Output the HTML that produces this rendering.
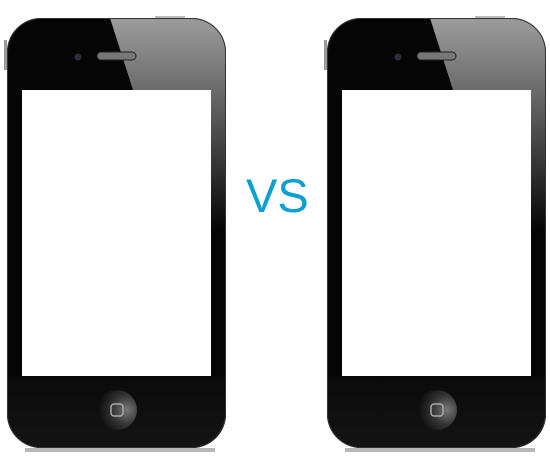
<!DOCTYPE html><html><head><style>body{margin:0;background:#fff;width:550px;height:474px;overflow:hidden;position:relative}
.vs{position:absolute;left:246px;top:168px;font:47px "Liberation Sans",sans-serif;color:#0aa0d2;}
</style></head><body>
<svg width="550" height="474" style="position:absolute;left:0;top:0">
<defs>
<linearGradient id="g" x1="0" y1="0" x2="0" y2="1"><stop offset="0" stop-color="#9c9c9c"/><stop offset="0.35" stop-color="#6a6a6a"/><stop offset="1" stop-color="#050505"/></linearGradient>
<radialGradient id="hb" cx="0.75" cy="0.5" r="0.75"><stop offset="0" stop-color="#777"/><stop offset="0.5" stop-color="#333"/><stop offset="1" stop-color="#0a0a0a"/></radialGradient>
<linearGradient id="bt" x1="0" y1="0" x2="0" y2="1"><stop offset="0" stop-color="#0a0a0a"/><stop offset="1" stop-color="#151515"/></linearGradient>
<clipPath id="c"><rect x="7" y="18" width="219" height="430" rx="34"/></clipPath>
<g id="p">
<rect x="25" y="448" width="190" height="4" fill="#888" opacity="0.6"/>
<rect x="4" y="40" width="3" height="30" fill="#999"/>
<rect x="155" y="16" width="30" height="3" fill="#bbb"/>
<rect x="7" y="18" width="219" height="430" rx="34" fill="#050505"/>
<g clip-path="url(#c)">
<polygon points="110,18 226,18 226,230 140,230 133,90" fill="url(#g)"/>
<rect x="7" y="376" width="219" height="80" fill="url(#bt)"/>
</g>
<rect x="7.5" y="18.5" width="218" height="429" rx="34" fill="none" stroke="#333"/>
<circle cx="78" cy="57" r="3.5" fill="#2a2d3a"/>
<rect x="97" y="52" width="39" height="8" rx="4" fill="#777" stroke="#222"/>
<rect x="22" y="90" width="189" height="286" fill="#fff"/>
<circle cx="117" cy="410" r="20" fill="url(#hb)"/>
<rect x="111" y="404" width="12" height="12" rx="3" fill="none" stroke="#aaa" stroke-width="1.5"/>
</g>
</defs>
<use href="#p"/>
<use href="#p" x="320"/>
</svg>
<div class="vs">VS</div>
</body></html>
